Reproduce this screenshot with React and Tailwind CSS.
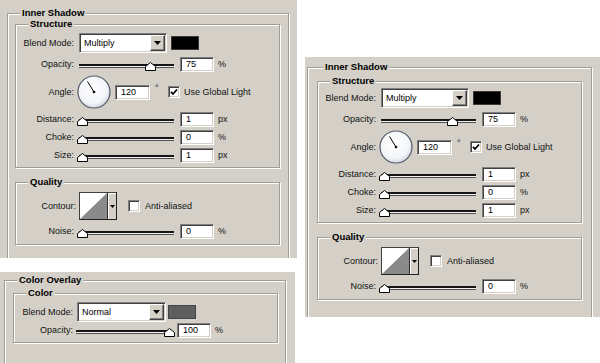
import React, { useId } from "react";

const SUNKEN =
  "border border-t-[#808080] border-l-[#808080] border-r-[#ffffff] border-b-[#ffffff] shadow-[inset_1px_1px_0_#404040,inset_-1px_-1px_0_#d4d0c8]";
const RAISED =
  "bg-[#d4d0c8] border border-t-[#ffffff] border-l-[#ffffff] border-r-[#404040] border-b-[#404040] shadow-[inset_-1px_-1px_0_#808080]";

function Group({ title, className = "", legendClass = "left-[12px]", children }) {
  return (
    <div
      className={
        "relative border border-[#a09d96] shadow-[inset_1px_1px_0_#ffffff,1px_1px_0_#ffffff] " +
        className
      }
    >
      <span
        className={
          "absolute top-[-7px] bg-[#d4d0c8] px-[2px] text-[9.5px] leading-[12px] font-bold text-black whitespace-nowrap " +
          legendClass
        }
      >
        {title}
      </span>
      {children}
    </div>
  );
}

function Label({ children, className = "w-[58px]" }) {
  return (
    <div className={"text-right text-[9px] leading-none text-[#111] whitespace-nowrap " + className}>
      {children}
    </div>
  );
}

function Input({ value, className = "" }) {
  return (
    <div
      className={
        "flex items-center bg-white pl-[5px] text-[9px] leading-none text-black " + SUNKEN + " " + className
      }
    >
      {value}
    </div>
  );
}

function Select({ value, className = "" }) {
  return (
    <div className={"flex items-stretch bg-white p-[1px] " + SUNKEN + " " + className}>
      <div className="flex-1 flex items-center pl-[3px] text-[9px] leading-none text-black">{value}</div>
      <div className={"w-[15px] flex items-center justify-center " + RAISED}>
        <svg width="7" height="4" viewBox="0 0 7 4">
          <path d="M0 0h7L3.5 4z" fill="#000" />
        </svg>
      </div>
    </div>
  );
}

function Slider({ pct, className = "" }) {
  return (
    <div className={"relative h-[16px] w-[97px] " + className}>
      <div className="absolute left-[2px] right-0 top-[8px] h-[4px] border-t-2 border-t-[#151515] border-b border-b-[#505050] bg-[#f2f2f2]" />
      <svg
        className="absolute top-[6px]"
        style={{ left: `${pct * 0.9}px` }}
        width="11"
        height="9"
        viewBox="0 0 11 9"
      >
        <path d="M0.5 8.5 V4.5 L5.5 0.5 L10.5 4.5 V8.5 Z" fill="#ffffff" stroke="#000" strokeWidth="1" />
      </svg>
    </div>
  );
}

function Checkbox({ checked, className = "" }) {
  return (
    <div className={"w-[12px] h-[12px] bg-white flex items-center justify-center " + SUNKEN + " " + className}>
      {checked && (
        <svg width="8" height="8" viewBox="0 0 8 8">
          <path d="M1 3.8 L3 6 L7 1.5" fill="none" stroke="#000" strokeWidth="1.8" />
        </svg>
      )}
    </div>
  );
}

function Dial() {
  const id = useId().replace(/:/g, "");
  return (
    <svg width="34" height="34" viewBox="0 0 34 34" className="ml-[3px]">
      <defs>
        <radialGradient id={id} cx="45%" cy="40%" r="65%">
          <stop offset="0" stopColor="#ffffff" />
          <stop offset="0.7" stopColor="#f3f5f8" />
          <stop offset="1" stopColor="#c4ccd8" />
        </radialGradient>
      </defs>
      <circle cx="17" cy="17" r="16" fill={`url(#${id})`} stroke="#565c6a" strokeWidth="1.2" />
      <line x1="17" y1="17" x2="10.5" y2="6.5" stroke="#000" strokeWidth="1" />
      <circle cx="17" cy="17" r="1.3" fill="#000" />
    </svg>
  );
}

function Contour() {
  return (
    <div className="flex w-[38px] h-[28px] border border-t-[#404040] border-l-[#404040] border-r-[#202020] border-b-[#202020] bg-white ml-[3px]">
      <svg width="27" height="26" viewBox="0 0 27 26">
        <path d="M0 26 L27 0 L27 26 Z" fill="#8a8a8a" />
      </svg>
      <div className="flex-1 border-l border-[#303030] bg-[#d4d0c8] shadow-[inset_1px_1px_0_#ffffff] flex items-center justify-center">
        <svg width="5" height="3" viewBox="0 0 5 3">
          <path d="M0 0h5L2.5 3z" fill="#000" />
        </svg>
      </div>
    </div>
  );
}

function Unit({ children }) {
  return <div className="ml-[4px] text-[9px] leading-none text-[#111]">{children}</div>;
}

function SliderRow({ label, pct, value, unit, className = "" }) {
  return (
    <div className={"flex items-center h-[16px] " + className}>
      <Label>{label}</Label>
      <Slider pct={pct} className="ml-[3px]" />
      <Input value={value} className="ml-[6px] w-[34px] h-[15px]" />
      <Unit>{unit}</Unit>
    </div>
  );
}

function InnerShadow({ outerClass, legendClass, structureClass }) {
  return (
    <Group title="Inner Shadow" className={outerClass} legendClass={legendClass}>
      <Group title="Structure" className={"w-[265px] pb-[4px] flex flex-col " + structureClass}>
        <div className="flex items-center h-[20px]">
          <Label>Blend Mode:</Label>
          <Select value="Multiply" className="ml-[5px] w-[88px] h-[20px]" />
          <div className="ml-[4px] w-[28px] h-[14px] bg-black border border-[#3a3a3a]" />
        </div>
        <SliderRow label="Opacity:" pct={75} value="75" unit="%" className="mt-[3px]" />
        <div className="flex items-center h-[34px] mt-[3px]">
          <Label>Angle:</Label>
          <Dial />
          <Input value="120" className="ml-[4px] w-[35px] h-[15px]" />
          <div className="ml-[5px] w-[8px] text-[9px] leading-none text-[#111] self-start mt-[9px]">°</div>
          <Checkbox checked className="ml-[5px]" />
          <div className="ml-[4px] text-[9px] leading-none text-[#111]">Use Global Light</div>
        </div>
        <SliderRow label="Distance:" pct={0} value="1" unit="px" className="mt-[2px]" />
        <SliderRow label="Choke:" pct={0} value="0" unit="%" className="mt-[2px]" />
        <SliderRow label="Size:" pct={0} value="1" unit="px" className="mt-[2px]" />
      </Group>
      <Group title="Quality" className="w-[265px] mt-[14px] pt-[9px] pb-[5px] flex flex-col">
        <div className="flex items-center h-[28px]">
          <Label className="w-[60px]">Contour:</Label>
          <Contour />
          <Checkbox className="ml-[11px]" />
          <div className="ml-[5px] text-[9px] leading-none text-[#111]">Anti-aliased</div>
        </div>
        <SliderRow label="Noise:" pct={0} value="0" unit="%" className="mt-[3px]" />
      </Group>
    </Group>
  );
}

function ColorOverlay() {
  return (
    <Group title="Color Overlay" className="w-[282px] h-[200px] pt-[12px] pl-[8px]">
      <Group title="Color" className="w-[265px] pt-[8px] pb-[4px] flex flex-col">
        <div className="flex items-center h-[20px]">
          <Label className="w-[59px]">Blend Mode:</Label>
          <Select value="Normal" className="ml-[4px] w-[89px] h-[20px]" />
          <div className="ml-[2px] w-[28px] h-[14px] bg-[#5e5e5e] border border-[#444]" />
        </div>
        <div className="flex items-center h-[16px]">
          <Label className="w-[59px]">Opacity:</Label>
          <Slider pct={100} className="ml-[1px]" />
          <Input value="100" className="ml-[6px] w-[34px] h-[15px]" />
          <Unit>%</Unit>
        </div>
      </Group>
    </Group>
  );
}

export default function App() {
  return (
    <div className="w-[600px] h-[363px] bg-white flex items-start overflow-hidden font-['Liberation_Sans',Arial,sans-serif]">
      <div className="w-[297px] flex flex-col">
        <div className="w-[297px] h-[258px] bg-[#d4d0c8] overflow-hidden pl-[7px] pt-[13px]">
          <InnerShadow
            outerClass="w-[282px] h-[300px] pt-[10px] pl-[7px]"
            legendClass="left-[12px]"
            structureClass="pt-[8px]"
          />
        </div>
        <div className="w-[295px] h-[91px] mt-[14px] bg-[#d4d0c8] overflow-hidden pl-[4px] pt-[8px]">
          <ColorOverlay />
        </div>
      </div>
      <div className="ml-[8px] mt-[57px] w-[295px] h-[260px] bg-[#d4d0c8] overflow-hidden pl-[2px] pt-[10px]">
        <InnerShadow
          outerClass="w-[285px] h-[300px] pt-[13px] pl-[9px]"
          legendClass="left-[15px]"
          structureClass="pt-[6px]"
        />
      </div>
    </div>
  );
}
